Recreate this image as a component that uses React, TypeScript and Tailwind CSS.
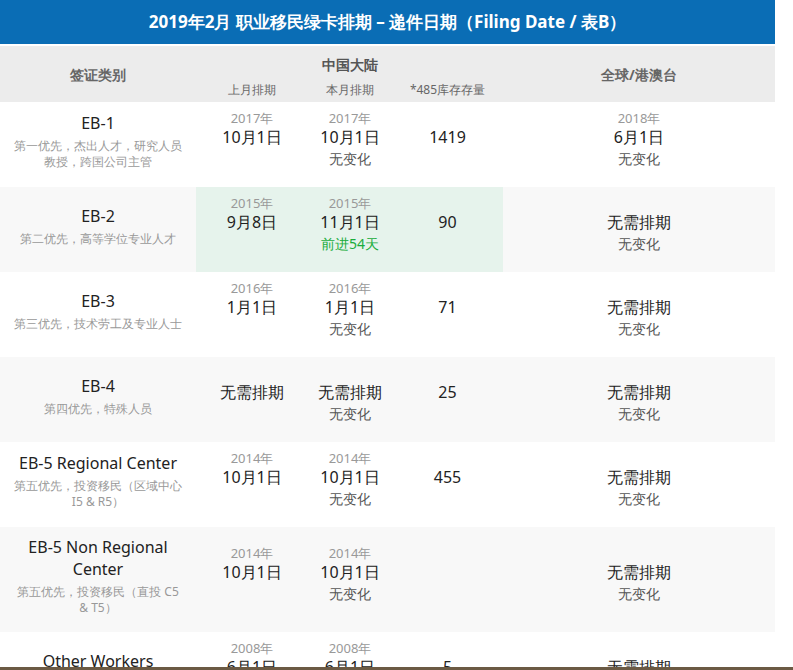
const rows = [
  { name: 'EB-1', desc: '第一优先，杰出人才，研究人员教授，跨国公司主管', lastY: '2017年', last: '10月1日', curY: '2017年', cur: '10月1日', chg: '无变化', stock: '1419', gY: '2018年', g: '6月1日', gChg: '无变化', h: 'h-[85px]', bg: 'bg-white' },
  { name: 'EB-2', desc: '第二优先，高等学位专业人才', lastY: '2015年', last: '9月8日', curY: '2015年', cur: '11月1日', chg: '前进54天', stock: '90', gY: '', g: '无需排期', gChg: '无变化', h: 'h-[85px]', bg: 'bg-[#f8f8f8]', green: true },
  { name: 'EB-3', desc: '第三优先，技术劳工及专业人士', lastY: '2016年', last: '1月1日', curY: '2016年', cur: '1月1日', chg: '无变化', stock: '71', gY: '', g: '无需排期', gChg: '无变化', h: 'h-[85px]', bg: 'bg-white' },
  { name: 'EB-4', desc: '第四优先，特殊人员', lastY: '', last: '无需排期', curY: '', cur: '无需排期', chg: '无变化', stock: '25', gY: '', g: '无需排期', gChg: '无变化', h: 'h-[85px]', bg: 'bg-[#f8f8f8]' },
  { name: 'EB-5 Regional Center', desc: '第五优先，投资移民（区域中心 I5 & R5）', lastY: '2014年', last: '10月1日', curY: '2014年', cur: '10月1日', chg: '无变化', stock: '455', gY: '', g: '无需排期', gChg: '无变化', h: 'h-[85px]', bg: 'bg-white' },
  { name: 'EB-5 Non Regional Center', desc: '第五优先，投资移民（直投 C5 & T5）', lastY: '2014年', last: '10月1日', curY: '2014年', cur: '10月1日', chg: '无变化', stock: '', gY: '', g: '无需排期', gChg: '无变化', h: 'h-[105px]', bg: 'bg-[#f8f8f8]', pad: 'pt-[18px]' },
  { name: 'Other Workers', desc: '其他工人', lastY: '2008年', last: '6月1日', curY: '2008年', cur: '6月1日', chg: '无变化', stock: '5', gY: '', g: '无需排期', gChg: '无变化', h: 'h-[85px]', bg: 'bg-white' },
];

function DateCell({ y, d, c, green }: { y: string; d: string; c?: string; green?: boolean }) {
  return (
    <div className="flex flex-col items-center">
      <span className="text-[13px] leading-[16px] h-[16px] text-[#999]">{y}</span>
      <span className="text-[16px] leading-[22px] text-[#222]">{d}</span>
      {c && <span className={`text-[14px] leading-[22px] ${green ? 'text-[#1aad3c]' : 'text-[#555]'}`}>{c}</span>}
    </div>
  );
}

export default function App() {
  return (
    <div className="relative w-[793px] h-[670px] overflow-hidden bg-white font-['Liberation_Sans','Noto_Sans_CJK_SC',sans-serif]">
      <div className="w-[775px]">
        <div className="h-[44px] bg-[#0a6db5] flex items-center justify-center text-white text-[17px] font-bold">
          2019年2月 职业移民绿卡排期 – 递件日期（Filing Date / 表B）
        </div>
        <div className="h-[2px] bg-white" />
        <div className="h-[56px] bg-[#ececec] flex text-[#666]">
          <div className="w-[196px] flex items-center justify-center text-[14px] font-bold">签证类别</div>
          <div className="w-[307px] flex flex-col items-center pt-[8px]">
            <div className="text-[14px] font-bold text-[#555]">中国大陆</div>
            <div className="flex w-full text-[12px] mt-[6px]">
              <div className="w-[112px] text-center">上月排期</div>
              <div className="w-[84px] text-center">本月排期</div>
              <div className="w-[111px] text-center">*485库存存量</div>
            </div>
          </div>
          <div className="flex-1 flex items-center justify-center text-[14px] font-bold">全球/港澳台</div>
        </div>
        {rows.map((r) => (
          <div key={r.name} className={`flex ${r.h} ${r.bg}`}>
            <div className="w-[196px] flex flex-col items-center justify-center pb-[8px] px-[14px] text-center">
              <div className="text-[16px] text-[#222] leading-[22px]">{r.name}</div>
              <div className="text-[12px] text-[#999] mt-[4px] leading-[16px]">{r.desc}</div>
            </div>
            <div className={`w-[307px] flex items-start ${r.pad ?? 'pt-[8px]'} ${r.green ? 'bg-[#e6f3ec]' : ''}`}>
              <div className="w-[112px] flex justify-center"><DateCell y={r.lastY} d={r.last} /></div>
              <div className="w-[84px] flex justify-center"><DateCell y={r.curY} d={r.cur} c={r.chg} green={r.green} /></div>
              <div className="w-[111px] text-center text-[16px] leading-[22px] text-[#222] pt-[16px]">
                {r.stock}
              </div>
            </div>
            <div className={`flex-1 flex justify-center ${r.pad ?? 'pt-[8px]'}`}>
              <DateCell y={r.gY} d={r.g} c={r.gChg} />
            </div>
          </div>
        ))}
      </div>
      <div className="absolute left-0 right-0 bottom-0 h-[3px] bg-[#6b5a44]" />
    </div>
  );
}
